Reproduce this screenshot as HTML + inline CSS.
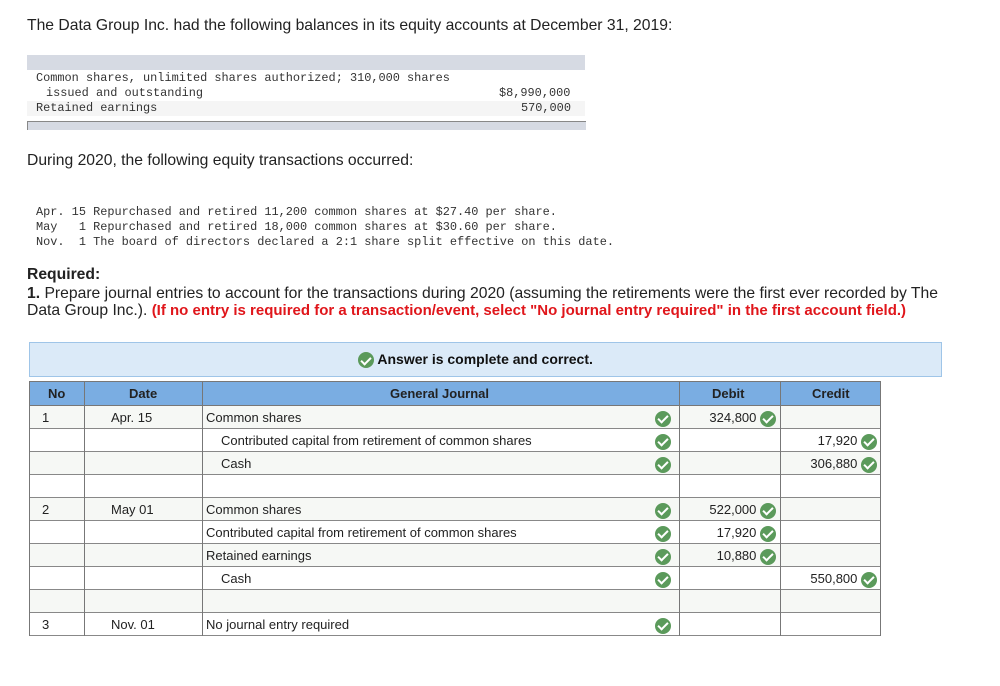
<!DOCTYPE html>
<html><head><meta charset="utf-8"><style>
body{margin:0;background:#fff;width:1000px;height:686px;position:relative;font-family:"Liberation Sans",sans-serif;color:#222;overflow:hidden}
.a{position:absolute;white-space:nowrap}
.t{font-size:15.7px}
.m{font-family:"Liberation Mono",monospace;font-size:11.9px;color:#333}
.ck{display:inline-block;width:16px;height:16px;border-radius:50%;background:#5b9a5b;vertical-align:middle;position:relative}
.ck:after{content:"";position:absolute;left:5px;top:2.5px;width:4px;height:8px;border:solid #fff;border-width:0 2.2px 2.2px 0;transform:rotate(45deg)}
.cell{position:absolute;font-size:13px;color:#222;line-height:23px;white-space:nowrap}
</style></head><body>
<div class="a t" style="left:27px;top:17px">The Data Group Inc. had the following balances in its equity accounts at December 31, 2019:</div>
<div class="a" style="left:27px;top:55px;width:558px;height:15px;background:#d6dae3"></div>
<div class="a" style="left:27px;top:101px;width:558px;height:15px;background:#f5f5f5"></div>
<div class="a m" style="left:36px;top:71px">Common shares, unlimited shares authorized; 310,000 shares</div>
<div class="a m" style="left:46px;top:86px">issued and outstanding</div>
<div class="a m" style="left:36px;top:101px">Retained earnings</div>
<div class="a m" style="left:499px;top:86px">$8,990,000</div>
<div class="a m" style="left:521px;top:101px">570,000</div>
<div class="a" style="left:27px;top:121px;width:558px;height:8px;background:#d6dae3;border-top:1px solid #888;border-left:1px solid #888"></div>
<div class="a t" style="left:27px;top:152px">During 2020, the following equity transactions occurred:</div>
<div class="a m" style="left:36px;top:205px">Apr. 15 Repurchased and retired 11,200 common shares at $27.40 per share.</div>
<div class="a m" style="left:36px;top:220px">May&nbsp;&nbsp; 1 Repurchased and retired 18,000 common shares at $30.60 per share.</div>
<div class="a m" style="left:36px;top:235px">Nov.&nbsp; 1 The board of directors declared a 2:1 share split effective on this date.</div>
<div class="a t" style="left:27px;top:266px;font-weight:bold">Required:</div>
<div class="a t" style="left:27px;top:285px"><b>1.</b> Prepare journal entries to account for the transactions during 2020 (assuming the retirements were the first ever recorded by The</div>
<div class="a t" style="left:27px;top:302px">Data Group Inc.). <b style="color:#e0161b;font-size:15px">(If no entry is required for a transaction/event, select "No journal entry required" in the first account field.)</b></div>
<div class="a" style="left:29px;top:342px;width:913px;height:35px;background:#dbeaf8;border:1px solid #9fc5e8;box-sizing:border-box"></div>
<div class="a" style="left:358px;top:351px;font-size:14px;font-weight:bold;color:#111"><span class="ck"></span> Answer is complete and correct.</div>
<div class="a" style="left:29px;top:381px;width:852px;height:255px;border:1px solid #777;box-sizing:border-box"></div>
<div class="a" style="left:29px;top:381px;width:852px;height:25px;background:#7aade2;border:1px solid #777;box-sizing:border-box"></div>
<div id="rows"></div>
<div class="cell" style="left:48px;top:382px;font-weight:bold">No</div>
<div class="cell" style="left:129px;top:382px;font-weight:bold">Date</div>
<div class="cell" style="left:390px;top:382px;font-weight:bold">General Journal</div>
<div class="cell" style="left:712px;top:382px;font-weight:bold">Debit</div>
<div class="cell" style="left:812px;top:382px;font-weight:bold">Credit</div>
<script>
var R=document.getElementById('rows'),h='';
for(var i=0;i<10;i++){var y=406+i*23;h+='<div class="a" style="left:30px;top:'+y+'px;width:850px;height:23px;background:'+(i%2==0?'#f6f8f5':'#fff')+';border-bottom:1px solid #888;box-sizing:border-box"></div>';}
[84,202,679,780].forEach(function(x){h+='<div class="a" style="left:'+x+'px;top:381px;width:1px;height:255px;background:#777"></div>'});
var d=[[0,'1','Apr. 15','Common shares',0,'324,800',''],[1,'','','Contributed capital from retirement of common shares',1,'','17,920'],[2,'','','Cash',1,'','306,880'],
[4,'2','May 01','Common shares',0,'522,000',''],[5,'','','Contributed capital from retirement of common shares',0,'17,920',''],[6,'','','Retained earnings',0,'10,880',''],[7,'','','Cash',1,'','550,800'],[9,'3','Nov. 01','No journal entry required',0,'','']];
d.forEach(function(r){var y=406+r[0]*23;
h+='<div class="cell" style="left:42px;top:'+y+'px">'+r[1]+'</div>';
h+='<div class="cell" style="left:111px;top:'+y+'px">'+r[2]+'</div>';
h+='<div class="cell" style="left:'+(r[4]?221:206)+'px;top:'+y+'px">'+r[3]+'</div>';
h+='<div class="cell" style="left:655px;top:'+(y+3)+'px;line-height:17px"><span class="ck"></span></div>';
if(r[5])h+='<div class="cell" style="right:'+(1000-776)+'px;top:'+y+'px">'+r[5]+' <span class="ck"></span></div>';
if(r[6])h+='<div class="cell" style="right:'+(1000-877)+'px;top:'+y+'px">'+r[6]+' <span class="ck"></span></div>';
});
R.innerHTML=h;
</script>
</body></html>
